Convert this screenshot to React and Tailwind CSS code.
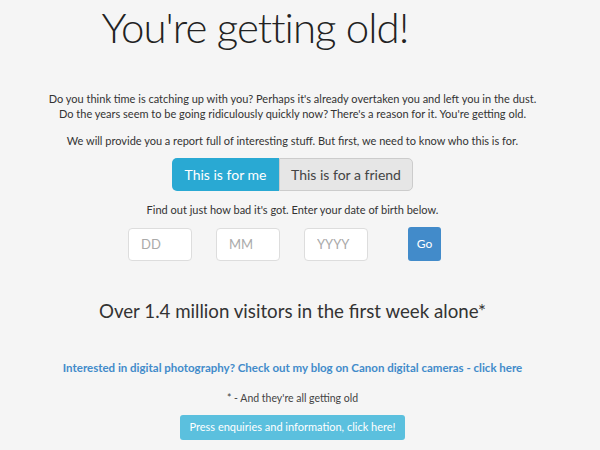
import React from "react";

export default function App() {
  return (
    <main className="min-h-[450px] bg-[#f5f5f5] text-[#333] font-['Lato',sans-serif]">
      <div className="flex w-[585px] flex-col items-center text-center">
        <h1 className="mr-[75px] mt-[1px] text-[42px] leading-[52px] font-light tracking-[-1px] text-[#222]">
          You're getting old!
        </h1>

        <div className="mt-[38px] text-[11px] leading-[15px] text-[#333]">
          <p>Do you think time is catching up with you? Perhaps it's already overtaken you and left you in the dust.</p>
          <p>Do the years seem to be going ridiculously quickly now? There's a reason for it. You're getting old.</p>
        </div>

        <p className="mt-[12px] text-[11px] leading-[15px]">
          We will provide you a report full of interesting stuff. But first, we need to know who this is for.
        </p>

        {/* who is it for */}
        <div className="mt-[10px] flex h-[33px] text-[14px]">
          <button className="w-[107px] rounded-l-[5px] bg-[#29a9d3] text-white">
            This is for me
          </button>
          <button className="w-[134px] rounded-r-[5px] border border-[#ccc] bg-[#e6e6e6] text-[#444]">
            This is for a friend
          </button>
        </div>

        <p className="mt-[11px] text-[11px] leading-[15px]">
          Find out just how bad it's got. Enter your date of birth below.
        </p>

        <div className="mt-[10px] flex items-center gap-[24px] pr-[16px]">
          <input
            placeholder="DD"
            className="h-[33px] w-[64px] rounded-[4px] border border-[#ddd] bg-white px-[12px] text-[13px] placeholder:text-[#aaa]"
          />
          <input
            placeholder="MM"
            className="h-[33px] w-[64px] rounded-[4px] border border-[#ddd] bg-white px-[12px] text-[13px] placeholder:text-[#aaa]"
          />
          <input
            placeholder="YYYY"
            className="h-[33px] w-[64px] rounded-[4px] border border-[#ddd] bg-white px-[12px] text-[13px] placeholder:text-[#aaa]"
          />
          <button className="ml-[16px] h-[34px] w-[33px] rounded-[3px] bg-[#428bca] text-[12px] text-white">
            Go
          </button>
        </div>

        <h2 className="mt-[38px] text-[18.7px] leading-[24px] text-[#333]">
          Over 1.4 million visitors in the first week alone*
        </h2>

        <a href="#" className="mt-[37px] text-[11.5px] leading-[15px] font-bold text-[#428bca]">
          Interested in digital photography? Check out my blog on Canon digital cameras - click here
        </a>

        <p className="mt-[16px] text-[10.5px] leading-[15px] text-[#444]">
          * - And they're all getting old
        </p>

        <button className="mt-[9px] h-[25px] w-[225px] rounded-[3px] bg-[#5bc0de] text-[11px] text-white">
          Press enquiries and information, click here!
        </button>
      </div>
    </main>
  );
}
